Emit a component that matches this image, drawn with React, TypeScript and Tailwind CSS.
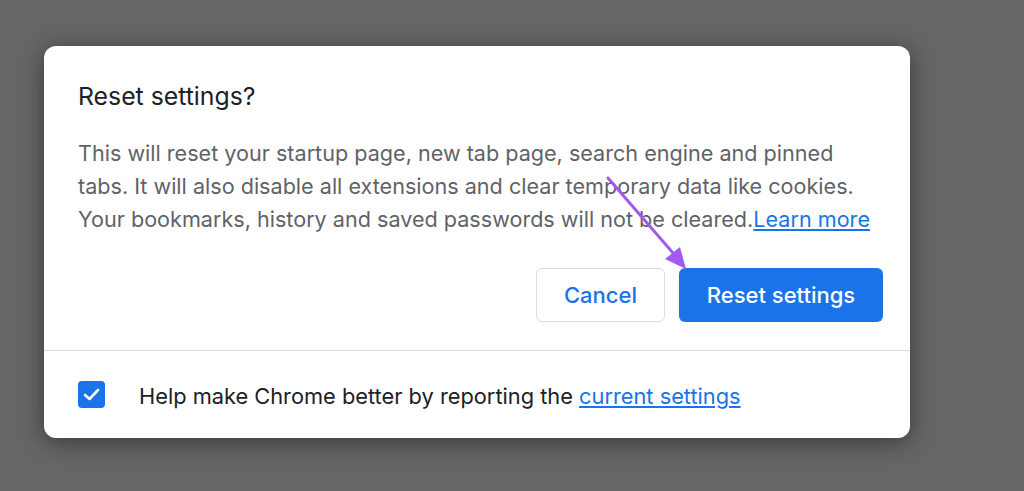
export default function App() {
  return (
    <div className="relative w-[1024px] h-[491px] bg-[#666666] overflow-hidden" style={{ fontFamily: 'Inter, "Liberation Sans", Arial, sans-serif' }}>
      <div className="absolute left-[44px] top-[46px] w-[866px] h-[392px] bg-white rounded-[12px] shadow-[0_4px_24px_rgba(0,0,0,0.45)] flex flex-col">
        <div className="pl-[34px] pr-[27px] pt-[34px] pb-[28px] border-b border-[#dadce0]">
          <h1 className="text-[24.8px] leading-[32px] text-[#202124]">Reset settings?</h1>
          <p className="mt-[25px] text-[21.6px] leading-[33px] text-[#5f6368] whitespace-nowrap">
            <span className="block">This will reset your startup page, new tab page, search engine and pinned</span>
            <span className="block">tabs. It will also disable all extensions and clear temporary data like cookies.</span>
            <span className="block">Your bookmarks, history and saved passwords will not be cleared.<a className="text-[#1a73e8] underline">Learn more</a></span>
          </p>
          <div className="mt-[32px] flex justify-end gap-[14px]">
            <button className="w-[129px] h-[54px] rounded-[6px] border border-[#dadce0] text-[#1a73e8] text-[22px] font-medium bg-white">Cancel</button>
            <button className="w-[204px] h-[54px] rounded-[6px] bg-[#1a73e8] text-white text-[22px] font-medium">Reset settings</button>
          </div>
        </div>
        <div className="flex-1 flex items-center px-[34px]">
          <div className="w-[27px] h-[27px] rounded-[4px] bg-[#1a73e8] flex items-center justify-center">
            <svg width="27" height="27" viewBox="0 0 27 27" fill="none">
              <path d="M7 14 L11.5 18 L20 9" stroke="white" strokeWidth="2.6" strokeLinecap="round" strokeLinejoin="round" />
            </svg>
          </div>
          <span className="ml-[34px] mt-[3px] text-[21.8px] text-[#202124]">
            Help make Chrome better by reporting the <a className="text-[#1a73e8] underline">current settings</a>
          </span>
        </div>
      </div>
      <svg className="absolute left-0 top-0" width="1024" height="491" viewBox="0 0 1024 491">
        <line x1="608" y1="178" x2="680" y2="261" stroke="#a259f0" strokeWidth="3" strokeLinecap="round" />
        <path d="M686 269 L665 259 L680 247 Z" fill="#a259f0" />
      </svg>
    </div>
  );
}
